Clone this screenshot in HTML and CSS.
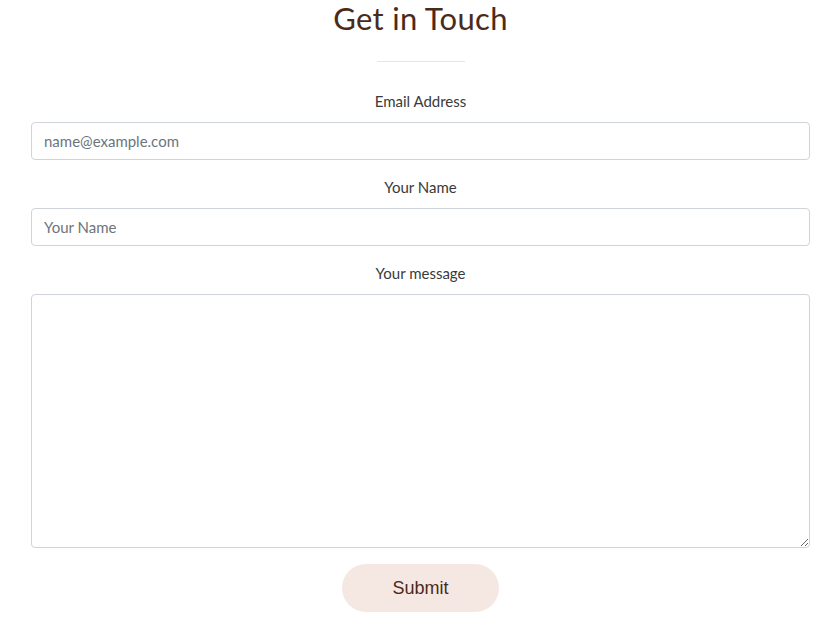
FILE: index.html
```html
<!DOCTYPE html>
<html lang="en">
<head>
<meta charset="utf-8">
<title>Get in Touch</title>
<link rel="stylesheet" href="styles.css">
</head>
<body>
<main class="contact">
  <h1 class="title">Get in Touch</h1>
  <hr class="divider">
  <form class="form">
    <label class="label" for="email">Email Address</label>
    <input class="field" id="email" type="email" placeholder="name@example.com">
    <label class="label" for="name">Your Name</label>
    <input class="field" id="name" type="text" placeholder="Your Name">
    <label class="label" for="msg">Your message</label>
    <textarea class="field area" id="msg"></textarea>
    <button class="submit" type="button">Submit</button>
  </form>
</main>
</body>
</html>
```
FILE: styles.css
```css
html, body { margin: 0; padding: 0; background: #fff; }
body { font-family: "Open Sans", "Lato", sans-serif; color: #3b2a22; }
.contact { padding: 0 30px 0 31px; display: flex; flex-direction: column; align-items: center; }
.title { margin: 0; font-family: "Lato", sans-serif; font-weight: 400; font-size: 31px; line-height: 37px; color: #4a2a1a; letter-spacing: 0.3px; }
.divider { width: 88px; border: 0; border-top: 1px solid #e6e6e6; margin: 24px 0 0; }
.form { width: 100%; display: flex; flex-direction: column; align-items: center; margin-top: 29px; }
.label { font-family: "Lato", sans-serif; font-size: 15px; line-height: 20px; color: #3a3a3a; margin-bottom: 11px; }
.field { box-sizing: border-box; width: 100%; height: 38px; border: 1px solid #ced4da; border-radius: 4px; padding: 6px 12px; font-family: "Lato", sans-serif; font-size: 15px; color: #495057; margin-bottom: 17px; background: #fff; }
.field::placeholder { color: #6c757d; }
.area { height: 254px; resize: vertical; margin-bottom: 16px; }
.submit { width: 157px; height: 48px; border: 0; border-radius: 24px; background: #f5e8e3; font-family: "Liberation Sans", Arial, sans-serif; font-size: 18px; color: #4a2a1a; cursor: pointer; }
```
